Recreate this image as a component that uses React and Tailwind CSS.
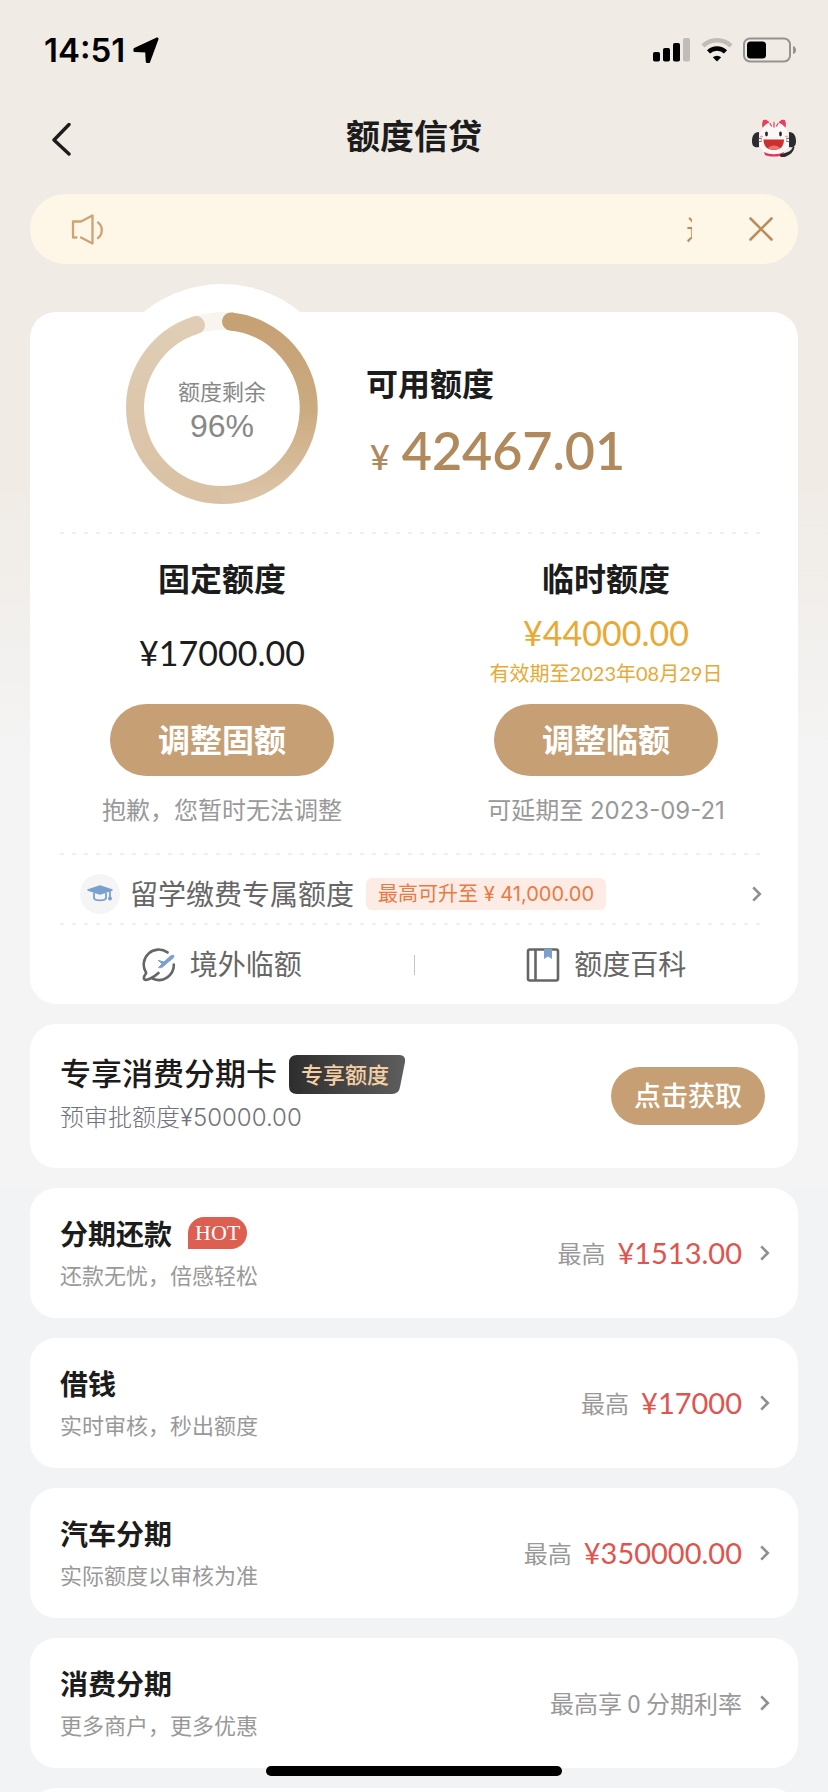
import { clsx } from "clsx";

const products = [
  { title: "分期还款", desc: "还款无忧，倍感轻松", hot: true, label: "最高", amount: "¥1513.00" },
  { title: "借钱", desc: "实时审核，秒出额度", label: "最高", amount: "¥17000" },
  { title: "汽车分期", desc: "实际额度以审核为准", label: "最高", amount: "¥350000.00" },
  { title: "消费分期", desc: "更多商户，更多优惠", label: "最高享 0 分期利率" },
];

function Chevron() {
  return (
    <svg className="h-4 w-2.5 shrink-0" viewBox="0 0 10 16" fill="none" stroke="#8f8f8f" strokeWidth="2.6">
      <path d="M1.2 1.4 7.8 8l-6.600 6.600" />
    </svg>
  );
}

function Divider() {
  return (
    <div className="ml-[30px] mr-[38px] h-0.5 bg-[repeating-linear-gradient(90deg,#efefef_0_4px,transparent_4px_12px)]" />
  );
}

function StatusBar() {
  return (
    <div className="flex h-[100px] items-center justify-between pl-11 pr-[31px] text-black">
      <div className="flex items-center gap-2">
        <span className="font-[Inter,sans-serif] text-[33px] font-semibold leading-10">14:51</span>
        <svg className="size-[26px]" viewBox="0 0 24 24" fill="currentColor" stroke="currentColor" strokeWidth="2.4" strokeLinejoin="round">
          <path d="M22.400 1.600 1.600 11.200v1.400l10.800.4.600 9.800h1.600Z" />
        </svg>
      </div>
      <div className="flex items-center gap-2.5">
        <svg className="h-6 w-[38px]" viewBox="0 0 38 24">
          <rect x="0" y="14" width="7" height="9.5" rx="1.8" />
          <rect x="10" y="10" width="7" height="13.5" rx="1.8" />
          <rect x="20" y="5" width="7" height="18.5" rx="1.8" />
          <rect x="30" y="0" width="7" height="23.5" rx="1.8" fill="#c0bcb7" />
        </svg>
        <svg className="h-6 w-8" viewBox="0 0 32 24" fill="none">
          <path d="M2 7.800a20.500 20.500 0 0 1 28 0" stroke="#c0bcb7" strokeWidth="4.5" />
          <path d="M7.500 13.800a12.500 12.500 0 0 1 17 0" stroke="#000" strokeWidth="4.5" />
          <path d="M11.800 19.200a6.400 6.400 0 0 1 8.400 0L16 23.500Z" fill="#000" />
        </svg>
        <svg className="h-[26px] w-[54px]" viewBox="0 0 54 26">
          <rect x="1" y="1.5" width="46" height="23" rx="6" fill="none" stroke="#96928e" strokeWidth="2" />
          <rect x="4" y="4.5" width="19" height="17" rx="3.5" />
          <path d="M50 9c2 .6 3 2 3 4s-1 3.400-3 4Z" fill="#96928e" />
        </svg>
      </div>
    </div>
  );
}

function CatIcon() {
  return (
    <svg className="h-10 w-11" viewBox="0 0 44 40">
      <path d="M7 14C2 14 0 18 0 23s2 7 7 6ZM37 14c5 0 7 4 7 9s-2 7-7 6Z" fill="#2c2c30" />
      <path d="M10 10c-1-5 0-9 3-9 2 0 4 2 5 4M34 10c1-5 0-9-3-9-2 0-4 2-5 4" fill="#e8405a" stroke="#fff" strokeWidth="1" />
      <path d="M22 4C13 4 8 11 7 21c-1 10 5 16 15 16s16-6 15-16C36 11 31 4 22 4Z" fill="#fbf7f6" />
      <path d="M12 34c6 3 14 3 20 0l-1 3c-5 2-13 2-18 0Z" fill="#e2375a" />
      <path d="M22 4.500v4.500M18 5.500l1.500 2.500M26 5.500 24.500 8" stroke="#e8405a" strokeWidth="1.3" strokeLinecap="round" />
      <ellipse cx="14.500" cy="16" rx="1.4" ry="2.4" fill="#2a2224" />
      <ellipse cx="28.500" cy="16" rx="1.4" ry="2.4" fill="#2a2224" />
      <path d="M6 20l4 1M6 24l4-1M38 20l-4 1M38 24l-4-1" stroke="#444" strokeWidth=".8" />
      <path d="M8 18.500h3M33 18.500h3" stroke="#f2a6ae" strokeWidth="1.4" />
      <path d="M11.500 21.500H32c0 7-4 10.500-10.200 10.500S11.500 28.500 11.500 21.500Z" fill="#cc2f2c" />
      <path d="M16 30c3-3.500 9-3.500 12 0-3 2.400-9 2.400-12 0Z" fill="#e8766f" />
      <path d="M41 28c-1 4-4 6-8 7l-5 1.500.5 2.500h4c6-2 9-5 10-10Z" fill="#2c2c30" />
    </svg>
  );
}

function Header() {
  return (
    <header className="flex h-[76px] items-center justify-between px-8">
      <button type="button" aria-label="返回" className="w-11 pl-[18px]">
        <svg className="h-9 w-[22px]" viewBox="0 0 22 36" fill="none" stroke="#1c1c1c" strokeWidth="3.4" strokeLinecap="round" strokeLinejoin="round">
          <path d="M19 4.500 4 20l15 14" />
        </svg>
      </button>
      <h1 className="pb-1.5 text-[34px] font-bold leading-[70px] text-[#1c1c1c]">额度信贷</h1>
      <button type="button" aria-label="客服">
        <CatIcon />
      </button>
    </header>
  );
}

function Notice() {
  return (
    <div className="mx-[30px] mt-[18px] flex h-[70px] items-center rounded-full bg-[#fef7e8] pl-10 pr-6 text-[#b98d5e]">
      <svg className="h-8 w-9" viewBox="0 0 36 32" fill="none" stroke="#cfa273" strokeWidth="2.3" strokeLinecap="round" strokeLinejoin="round">
        <path d="M6.500 24.500H3V8.500h8l11.500-6v28L11 24.500" />
        <path d="M28 9.500c5 3.500 5 12 0 15.500" />
      </svg>
      <div className="flex flex-1 justify-end">
        {/* tail of the scrolling message */}
        <div className="w-1.5 overflow-hidden whitespace-nowrap text-[28px] leading-[38px]">近</div>
      </div>
      <button type="button" aria-label="关闭" className="ml-14">
        <svg className="size-[26px]" viewBox="0 0 26 26" fill="none" stroke="currentColor" strokeWidth="2.6" strokeLinecap="round">
          <path d="m2.500 2.500 21 21M23.500 2.500l-21 21" />
        </svg>
      </button>
    </div>
  );
}

function QuotaRing() {
  return (
    <div className="relative -m-7 shrink-0">
      <svg className="size-[248px]" viewBox="0 0 248 248" fill="none">
        <defs>
          <linearGradient id="ringRight" x1="0" y1="0" x2="0" y2="1">
            <stop offset="0" stopColor="#c6a174" />
            <stop offset=".5" stopColor="#cbaa80" />
            <stop offset="1" stopColor="#dcc3a6" />
          </linearGradient>
          <linearGradient id="ringLeft" x1="0" y1="0" x2="0" y2="1">
            <stop offset="0" stopColor="#dfcdb5" />
            <stop offset="1" stopColor="#dac1a4" />
          </linearGradient>
        </defs>
        <circle cx="124" cy="124" r="124" fill="#fff" />
        <circle cx="124" cy="124" r="87" stroke="#f8f5f1" strokeWidth="18" />
        <path d="M124 211A87 87 0 0 1 98 41" stroke="url(#ringLeft)" strokeWidth="18" strokeLinecap="round" />
        <path d="M133 37.500A87 87 0 0 1 124 211" stroke="url(#ringRight)" strokeWidth="18" />
        <path d="M133 37.500l1 .1" stroke="#c6a174" strokeWidth="18" strokeLinecap="round" />
      </svg>
      <div className="absolute inset-0 flex flex-col items-center justify-center text-[#888]">
        <span className="text-[22px] leading-9">额度剩余</span>
        <span className="font-['Liberation_Sans',sans-serif] text-[32px] leading-9">96%</span>
      </div>
    </div>
  );
}

function QuotaColumn({ title, value, valid, action, note }) {
  return (
    <div className="flex flex-col items-center">
      <h2 className="text-[32px] font-bold leading-[46px] text-[#1c1c1c]">{title}</h2>
      <div
        className={clsx(
          "mt-3 flex h-[82px] flex-col items-center justify-center font-[Lato,'Noto_Sans_CJK_SC',sans-serif] leading-10",
          valid ? "text-[#e8a935]" : "text-[#1c1c1c]"
        )}
      >
        <span className="text-[34px]">{value}</span>
        {valid && <span className="text-xl leading-10">{valid}</span>}
      </div>
      <button type="button" className="mt-2.5 h-[72px] w-56 rounded-full bg-[#c6a074] pb-1 text-[32px] font-bold text-white">
        {action}
      </button>
      <p className="mt-4 pb-[23px] font-[Inter,'Noto_Sans_CJK_SC',sans-serif] text-2xl leading-[38px] text-[#999]">{note}</p>
    </div>
  );
}

function QuotaCard() {
  return (
    <section className="mx-[30px] mt-12 rounded-[26px] bg-white">
      <div className="flex items-center gap-12 pl-24">
        <QuotaRing />
        <div className="pt-[30px]">
          <h2 className="text-[32px] font-bold leading-[60px] text-[#1c1c1c]">可用额度</h2>
          <p className="flex items-baseline gap-3 font-[Lato,sans-serif] font-semibold leading-[76px] text-[#b08a5c]">
            <span className="pl-1 text-[34px]">¥</span>
            <span className="text-[52px]">42467.01</span>
          </p>
        </div>
      </div>
      <div className="h-7" />
      <Divider />
      <div className="grid grid-cols-2 pt-5">
        <QuotaColumn title="固定额度" value="¥17000.00" action="调整固额" note="抱歉，您暂时无法调整" />
        <QuotaColumn title="临时额度" value="¥44000.00" valid="有效期至2023年08月29日" action="调整临额" note="可延期至 2023-09-21" />
      </div>
      <Divider />
      <a href="#study" className="flex h-[68px] items-center pl-[50px] pr-9 pt-2.5">
        <span className="flex size-10 items-center justify-center rounded-full bg-[#f5f5f5]">
          <svg className="h-5 w-[26px]" viewBox="0 0 26 20">
            <path d="M13 2 1 6l12 4 12-4Z" fill="#7ba0cf" stroke="#7ba0cf" strokeWidth="1.5" strokeLinejoin="round" />
            <path d="M7 9v5.500c2 2.500 10 2.500 12 0V9M23 6v9" fill="none" stroke="#7ba0cf" strokeWidth="1.8" />
            <circle cx="23" cy="14.5" r="2" fill="#7ba0cf" />
          </svg>
        </span>
        <span className="ml-2.5 pb-0.5 text-[28px] text-[#666]">留学缴费专属额度</span>
        <span className="ml-3 rounded-md bg-[#fcece5] px-3 font-[Inter,'Noto_Sans_CJK_SC',sans-serif] text-xl leading-8 text-[#ea7a43]">
          最高可升至 ¥ 41,000.00
        </span>
        <span className="ml-auto">
          <Chevron />
        </span>
      </a>
      <Divider />
      <div className="flex h-[79px] items-center text-[28px] text-[#666]">
        <a href="#abroad" className="flex flex-1 items-center justify-center gap-3.5">
          <svg className="size-[34px]" viewBox="0 0 34 34" fill="none" stroke="#666" strokeWidth="2.6" strokeLinecap="round">
            <path d="M25.500 4.400A15 15 0 0 0 4 24.500M31.800 16.500A15 15 0 0 1 11 30.800" />
            <path d="M4 25.500c-2 2.500-2.500 5-1.500 6 2 1.500 9-2 14-6.500" />
            <path d="m16.500 12.500 5.500 1.500 6-5.500c2-1.700 4.500-1.500 4 0-.3 1.200-2 2.500-7.500 7-3 3-5 5-8 4l3.500-3.500Z" fill="#7ba0cf" stroke="#7ba0cf" strokeWidth="1" />
          </svg>
          <span className="pb-1">境外临额</span>
        </a>
        <span className="h-5 w-px bg-[#c4c4c4]" />
        <a href="#wiki" className="flex flex-1 items-center justify-center gap-3.5">
          <svg className="size-[34px]" viewBox="0 0 34 34" fill="none" stroke="#666" strokeWidth="2.6">
            <rect x="2" y="1.5" width="30" height="31" rx="2" />
            <path d="M9.500 2v30" />
            <path d="M18 1h8v10l-4-2.500-4 2.500Z" fill="#7ba0cf" stroke="none" />
          </svg>
          <span className="pb-1">额度百科</span>
        </a>
      </div>
    </section>
  );
}

function ExclusiveCard() {
  return (
    <section className="mx-[30px] flex items-center justify-between rounded-[26px] bg-white py-7 pl-[30px] pr-[33px]">
      <div>
        <div className="flex h-11 items-center gap-3">
          <h2 className="pb-1 text-[31px] font-medium text-[#1c1c1c]">专享消费分期卡</h2>
          <span className="relative flex h-[39px] w-[116px] items-center pb-0.5 pl-3 text-[22px] font-medium text-[#f3cfa3]">
            <svg className="absolute inset-0 size-full" viewBox="0 0 116 39">
              <defs>
                <linearGradient id="badge">
                  <stop offset="0" stopColor="#2d2d2d" />
                  <stop offset="1" stopColor="#5e5e5e" />
                </linearGradient>
              </defs>
              <path d="M8 0h102q7 0 6 7l-5 25q-1 7-8 7H8q-8 0-8-8V8q0-8 8-8Z" fill="url(#badge)" />
            </svg>
            <span className="relative">专享额度</span>
          </span>
        </div>
        <p className="font-[Inter,'Noto_Sans_CJK_SC',sans-serif] text-2xl font-light leading-[44px] text-[#72727c]">预审批额度¥50000.00</p>
      </div>
      <button type="button" className="h-[58px] w-[154px] rounded-full bg-[#c6a074] pb-0.5 text-[27px] font-medium text-white">
        点击获取
      </button>
    </section>
  );
}

function ProductCard({ title, desc, hot, label, amount }) {
  return (
    <a href="#product" className="mx-[30px] flex items-center rounded-[26px] bg-white py-6 pl-[30px] pr-7">
      <div className="flex-1">
        <div className="flex items-center gap-4">
          <h2 className="text-[28px] font-bold leading-[42px] text-[#1c1c1c]">{title}</h2>
          {hot && (
            <span className="rounded-2xl rounded-bl-none bg-[#dd5f52] px-[7px] font-['Liberation_Serif',serif] text-[22px] leading-8 text-white">HOT</span>
          )}
        </div>
        <p className="text-[22px] leading-10 text-[#999]">{desc}</p>
      </div>
      <div className="flex items-center">
        <span className="text-2xl text-[#999]">{label}</span>
        {amount && <span className="ml-3 font-[Lato,sans-serif] text-[29px] text-[#e0544f]">{amount}</span>}
        <span className="ml-[18px]">
          <Chevron />
        </span>
      </div>
    </a>
  );
}

function App() {
  return (
    <div className="h-screen overflow-hidden bg-[#f2f3f5] font-['Noto_Sans_CJK_SC',sans-serif]">
      <div className="bg-[linear-gradient(#f0ebe5_0_480px,#f4f4f4_760px)] pb-5">
        <StatusBar />
        <Header />
        <Notice />
        <QuotaCard />
        <div className="h-5" />
        <ExclusiveCard />
      </div>
      <div className="flex flex-col gap-5">
        {products.map((item) => (
          <ProductCard key={item.title} {...item} />
        ))}
        <div className="mx-[30px] h-32 rounded-[26px] bg-white" />
      </div>
      <div className="fixed bottom-4 left-1/2 h-2.5 w-[296px] -translate-x-1/2 rounded-full bg-black" />
    </div>
  );
}

export default App;
